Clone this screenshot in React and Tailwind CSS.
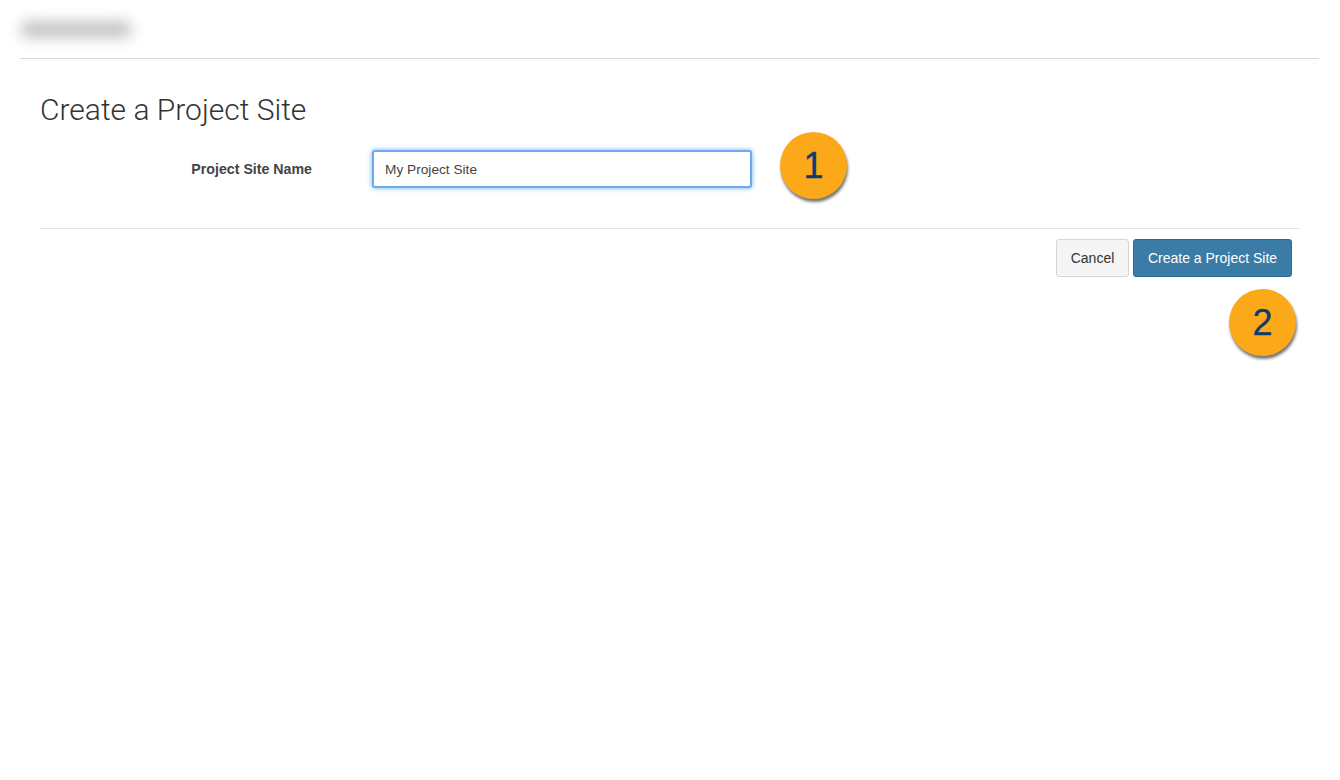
const Badge = ({ n, className }) => (
  <div
    className={`absolute w-[67px] h-[67px] rounded-full bg-[#fba919] flex items-center justify-center text-[#0d3a70] text-[36px] [-webkit-text-stroke:0.3px_#0d3a70] font-['Liberation_Sans',sans-serif] shadow-[1px_3px_3px_rgba(0,0,0,0.55)] ${className}`}
  >
    {n}
  </div>
);

export default function App() {
  return (
    <div className="relative w-[1339px] min-h-[780px] bg-white font-['Liberation_Sans',Arial,sans-serif] text-[#333]">
      {/* header */}
      <div className="mx-5 h-[59px] border-b border-[#d8d8d8] flex items-start">
        <div className="mt-[21px] h-[17px] w-[112px] rounded-full bg-[#c4c4c4] blur-[7px]" />
      </div>

      {/* form */}
      <div className="px-10">
        <h1 className="mt-[33px] text-[30px] leading-[36px] font-['Roboto',sans-serif] font-light text-[#333]">
          Create a Project Site
        </h1>
        <div className="mt-[22px] flex items-center">
          <label className="w-[272px] pt-[2px] text-right text-[14.2px] font-bold text-[#444]">Project Site Name</label>
          <input
            readOnly
            value="My Project Site"
            className="ml-[60px] w-[380px] h-[38px] px-[11px] bg-white rounded-[3px] border-2 border-[#6fa8ec] shadow-[0_0_5px_rgba(82,168,236,0.9)] text-[13.7px] text-[#444] outline-none"
          />
        </div>
        <div className="mt-[40px] border-t border-[#e5e5e5] pt-[10px] pr-[7px] flex justify-end gap-1">
          <button className="h-[38px] w-[73px] rounded-[3px] border border-[#d5d5d5] bg-[#f5f5f5] text-[14px] text-[#333]">
            Cancel
          </button>
          <button className="h-[38px] w-[159px] rounded-[3px] border border-[#2e6a8e] bg-[#3a7ca5] text-[14px] text-white">
            Create a Project Site
          </button>
        </div>
      </div>

      <Badge n="1" className="left-[780px] top-[132px]" />
      <Badge n="2" className="left-[1229px] top-[289px]" />
    </div>
  );
}
